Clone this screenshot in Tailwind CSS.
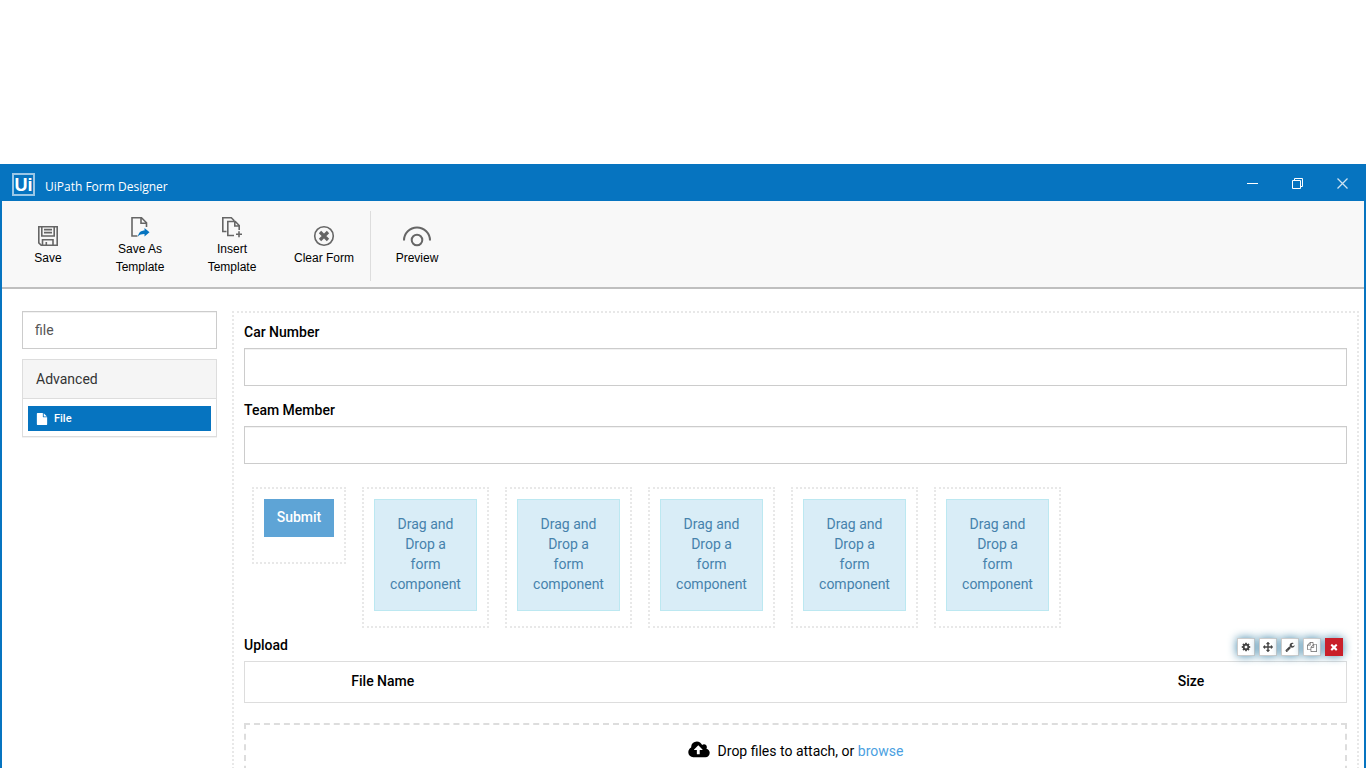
<!DOCTYPE html>
<html lang="en">
<head>
    <meta charset="UTF-8">
    <meta name="viewport" content="width=device-width, initial-scale=1.0">
    <title>UiPath Form Designer</title>
    <script src="https://cdn.jsdelivr.net/npm/@tailwindcss/browser@4"></script>
</head>
<body class="bg-white h-screen overflow-hidden flex flex-col pt-[164px] font-[Roboto,sans-serif] text-sm leading-5 text-black">

<!-- Title bar -->
<header class="flex items-center justify-between h-[37px] shrink-0 bg-[#0674c0] text-white pl-3 pr-[17px]">
    <div class="flex items-center gap-2.5">
        <div class="w-[23px] h-[23px] mt-1 flex items-center justify-center border-2 border-white/60 font-['Liberation_Sans',sans-serif] font-bold text-[18px] leading-5">Ui</div>
        <h1 class="font-['Open_Sans',sans-serif] text-[12px] leading-4 pt-2">UiPath Form Designer</h1>
    </div>
    <div class="flex items-center gap-[33px]">
        <button type="button" aria-label="Minimize"><svg class="w-3 h-3" viewBox="0 0 12 12" stroke="#fff"><path d="M0 6.500h11"/></svg></button>
        <button type="button" aria-label="Restore"><svg class="w-3 h-3" viewBox="0 0 12 12" fill="none" stroke="#fff"><path d="M.5 3.500h8v8h-8zM2.500 3V1.500h8v8H9"/></svg></button>
        <button type="button" aria-label="Close"><svg class="w-3 h-3" viewBox="0 0 12 12" stroke="#fff" opacity=".8"><path d="M.5 1.500l10 10M10.500 1.500l-10 10" stroke-width="1.300"/></svg></button>
    </div>
</header>

<div class="flex-1 min-h-0 flex flex-col border-x-2 border-[#0674c0]">

    <!-- Toolbar -->
    <nav class="flex items-center h-[88px] pt-[3px] shrink-0 bg-[#f8f8f8] border-b-2 border-[#bfbfbf] font-['Liberation_Sans',sans-serif] text-[12px] leading-[18px]">
        <button type="button" class="w-[92px] flex flex-col items-center gap-0.5">
            <svg class="w-[22px] h-[22px]" viewBox="0 0 22 22" fill="none" stroke="#666" stroke-width="1.600" aria-hidden="true">
                <path d="M1.800 1.800h18.400v18.400H4.200L1.800 17.800zM4.800 1.800v9.200h12.400V1.800M7 4.600h8M7 7.600h8M5.500 20v-5.300h10.500V20M9.300 20v-3"/>
            </svg>
            Save
        </button>
        <button type="button" class="w-[92px] flex flex-col items-center gap-0.5">
            <svg class="w-[22px] h-[22px]" viewBox="0 0 22 22" fill="none" stroke="#666" stroke-width="1.600" aria-hidden="true">
                <path d="M8.500 20H3V1.800h9.500l5 5V11M12 1.800v5.500h5.500"/>
                <path d="M9 20.500c.5-4 3-6 6.500-6V12l5 4.200-5 4.300V18c-3 0-5 .7-6.500 2.500z" fill="#0674c0" stroke="none"/>
            </svg>
            <span>Save As<br>Template</span>
        </button>
        <button type="button" class="w-[92px] flex flex-col items-center gap-0.5">
            <svg class="w-[22px] h-[22px]" viewBox="0 0 22 22" fill="none" stroke="#666" stroke-width="1.600" aria-hidden="true">
                <path d="M5.500 15.500H1.800V1.800h8.500l3 3M13 19.500H6.800v-14h7.500l3.900 4V14M13.800 5.500V10h4.300M15 18.200h6M18 15.200v6"/>
            </svg>
            <span>Insert<br>Template</span>
        </button>
        <button type="button" class="w-[92px] flex flex-col items-center gap-0.5">
            <svg class="w-[22px] h-[22px]" viewBox="0 0 22 22" fill="none" stroke="#666" aria-hidden="true">
                <circle cx="11" cy="11" r="9.300" stroke-width="1.600"/>
                <path d="M7 7l8 8M15 7l-8 8" stroke-width="3.300"/>
            </svg>
            Clear Form
        </button>
        <div class="w-px h-[70px] bg-[#ddd]"></div>
        <button type="button" class="w-[92px] flex flex-col items-center gap-0.5">
            <svg class="w-[30px] h-[22px]" viewBox="0 0 30 22" fill="none" stroke="#666" stroke-width="2" aria-hidden="true">
                <path d="M2 15.500a13 13 0 0 1 26 0"/>
                <circle cx="15" cy="15" r="5.300"/>
            </svg>
            Preview
        </button>
    </nav>

    <div class="flex-1 min-h-0 flex items-start gap-[15px] pt-[22px] pl-5 pr-[5px]">

        <!-- Component list -->
        <aside class="w-[195px] shrink-0">
            <input type="text" aria-label="Search components" value="file" class="block w-full h-[38px] px-3 border border-[#ccc] text-[#555] inset-shadow-2xs">
            <section class="mt-2.5 border border-[#ddd] shadow-2xs">
                <h2 class="px-[13px] py-[9px] bg-[#f5f5f5] border-b border-[#ddd] text-[#333]">Advanced</h2>
                <div class="px-[5px] pt-[7px] pb-[5px]">
                    <button type="button" class="w-full h-[25px] flex items-center gap-1.5 px-2 bg-[#0674c0] text-white text-[11px] font-medium">
                        <svg class="w-3 h-3" viewBox="0 0 1792 1792" fill="currentColor" aria-hidden="true"><path d="M1152 512v-472q22 14 36 28l408 408q14 14 28 36h-472zm-128 32q0 40 28 68t68 28h544v1056q0 40-28 68t-68 28h-1344q-40 0-68-28t-28-68v-1600q0-40 28-68t68-28h800v544z"/></svg>
                        File
                    </button>
                </div>
            </section>
        </aside>

        <!-- Form canvas -->
        <main class="flex-1 min-w-0 border-2 border-dotted border-[#e8e8e8] px-2.5 pt-[9px] pb-2.5">
            <div class="mb-[14px]">
                <label for="car-number" class="block mb-1.5 font-medium">Car Number</label>
                <input type="text" id="car-number" class="block w-full h-[38px] px-3 border border-[#ccc] inset-shadow-2xs">
            </div>
            <div>
                <label for="team-member" class="block mb-1.5 font-medium">Team Member</label>
                <input type="text" id="team-member" class="block w-full h-[38px] px-3 border border-[#ccc] inset-shadow-2xs">
            </div>

            <div class="flex items-start gap-4 mt-[23px] ml-2">
                <div class="border-2 border-dotted border-[#e8e8e8] px-2.5 pt-2.5 pb-[25px]">
                    <button type="button" class="block w-[70px] h-[38px] pb-0.5 bg-[#5ea4d6] text-white font-medium">Submit</button>
                </div>
                <div class="border-2 border-dotted border-[#e8e8e8] px-2.5 pt-2.5 pb-[15px]">
                    <div class="w-[103px] px-[15px] pt-[14px] pb-4 bg-[#d9edf7] border border-[#bce8f1] text-[#4682ac] text-center">Drag and Drop a form component</div>
                </div>
                <div class="border-2 border-dotted border-[#e8e8e8] px-2.5 pt-2.5 pb-[15px]">
                    <div class="w-[103px] px-[15px] pt-[14px] pb-4 bg-[#d9edf7] border border-[#bce8f1] text-[#4682ac] text-center">Drag and Drop a form component</div>
                </div>
                <div class="border-2 border-dotted border-[#e8e8e8] px-2.5 pt-2.5 pb-[15px]">
                    <div class="w-[103px] px-[15px] pt-[14px] pb-4 bg-[#d9edf7] border border-[#bce8f1] text-[#4682ac] text-center">Drag and Drop a form component</div>
                </div>
                <div class="border-2 border-dotted border-[#e8e8e8] px-2.5 pt-2.5 pb-[15px]">
                    <div class="w-[103px] px-[15px] pt-[14px] pb-4 bg-[#d9edf7] border border-[#bce8f1] text-[#4682ac] text-center">Drag and Drop a form component</div>
                </div>
                <div class="border-2 border-dotted border-[#e8e8e8] px-2.5 pt-2.5 pb-[15px]">
                    <div class="w-[103px] px-[15px] pt-[14px] pb-4 bg-[#d9edf7] border border-[#bce8f1] text-[#4682ac] text-center">Drag and Drop a form component</div>
                </div>
            </div>

            <!-- Upload component with its edit buttons -->
            <div class="mt-1.5">
                <div class="flex items-center justify-between mb-[5px]">
                    <h3 class="font-medium">Upload</h3>
                    <div class="flex gap-1 pt-1 pr-1 text-[#444]">
                        <button type="button" aria-label="Settings" class="w-[18px] h-[18px] flex items-center justify-center bg-white border border-[#ccc] shadow-[0_0_10px_#48a]">
                            <svg class="w-2.5 h-2.5" viewBox="0 0 1792 1792" fill="currentColor"><path d="M1152 896q0-106-75-181t-181-75-181 75-75 181 75 181 181 75 181-75 75-181zm512-109v222q0 12-8 23t-20 13l-185 28q-19 54-39 91 35 50 107 138 10 12 10 25t-9 23q-27 37-99 108t-94 71q-12 0-26-9l-138-108q-44 23-91 38-16 136-29 186-7 28-36 28h-222q-14 0-24.500-8.500t-11.500-21.500l-28-184q-49-16-90-37l-141 107q-10 9-25 9-14 0-25-11-126-114-165-168-7-10-7-23 0-12 8-23 15-21 51-66.500t54-70.500q-27-50-41-99l-183-27q-13-2-21-12.500t-8-23.500v-222q0-12 8-23t19-13l186-28q14-46 39-92-40-57-107-138-10-12-10-24 0-10 9-23 26-36 98.500-107.500t94.500-71.500q13 0 26 10l138 107q44-23 91-38 16-136 29-186 7-28 36-28h222q14 0 24.500 8.500t11.500 21.500l28 184q49 16 90 37l142-107q9-9 24-9 13 0 25 10 129 119 165 170 7 8 7 22 0 12-8 23-15 21-51 66.500t-54 70.500q26 50 41 98l183 28q13 2 21 12.500t8 23.500z"/></svg>
                        </button>
                        <button type="button" aria-label="Move" class="w-[18px] h-[18px] flex items-center justify-center bg-white border border-[#ccc] shadow-[0_0_10px_#48a]">
                            <svg class="w-2.5 h-2.5" viewBox="0 0 1792 1792" fill="currentColor"><path d="M1792 896q0 26-19 45l-256 256q-19 19-45 19t-45-19-19-45v-128h-384v384h128q26 0 45 19t19 45-19 45l-256 256q-19 19-45 19t-45-19l-256-256q-19-19-19-45t19-45 45-19h128v-384h-384v128q0 26-19 45t-45 19-45-19l-256-256q-19-19-19-45t19-45l256-256q19-19 45-19t45 19 19 45v128h384v-384h-128q-26 0-45-19t-19-45 19-45l256-256q19-19 45-19t45 19l256 256q19 19 19 45t-19 45-45 19h-128v384h384v-128q0-26 19-45t45-19 45 19l256 256q19 19 19 45z"/></svg>
                        </button>
                        <button type="button" aria-label="Edit JSON" class="w-[18px] h-[18px] flex items-center justify-center bg-white border border-[#ccc] shadow-[0_0_10px_#48a]">
                            <svg class="w-2.5 h-2.5" viewBox="0 0 1792 1792" fill="currentColor"><path d="M448 1472q0-26-19-45t-45-19-45 19-19 45 19 45 45 19 45-19 19-45zm644-420l-682 682q-37 37-90 37-52 0-91-37l-106-108q-38-36-38-90 0-53 38-91l681-681q39 98 114.500 173.500t173.500 114.500zm634-435q0 39-23 106-47 134-164.500 217.500t-258.500 83.500q-185 0-316.500-131.500t-131.500-316.500 131.500-316.500 316.500-131.500q58 0 121.500 16.500t107.500 46.500q16 11 16 28t-16 28l-293 169v224l193 107q5-3 79-48.500t135.500-81 70.500-35.500q15 0 23.500 10t8.500 25z"/></svg>
                        </button>
                        <button type="button" aria-label="Copy" class="w-[18px] h-[18px] flex items-center justify-center bg-white border border-[#ccc] text-[#666] shadow-[0_0_10px_#48a]">
                            <svg class="w-2.5 h-2.5" viewBox="0 0 1792 1792" fill="currentColor"><path d="M1696 384q40 0 68 28t28 68v1216q0 40-28 68t-68 28h-960q-40 0-68-28t-28-68v-288h-544q-40 0-68-28t-28-68v-672q0-40 20-88t48-76l408-408q28-28 76-48t88-20h416q40 0 68 28t28 68v328q68-40 128-40h416zm-544 213l-299 299h299v-299zm-640-384l-299 299h299v-299zm196 647l316-316v-416h-384v416q0 40-28 68t-68 28h-416v640h512v-256q0-40 20-88t48-76zm956 804v-1152h-384v416q0 40-28 68t-68 28h-416v640h896z"/></svg>
                        </button>
                        <button type="button" aria-label="Remove" class="w-[18px] h-[18px] flex items-center justify-center bg-[#c9202a] text-white shadow-[0_0_10px_#48a]">
                            <svg class="w-2.5 h-2.5" viewBox="0 0 1792 1792" fill="currentColor"><path d="M1490 1322q0 40-28 68l-136 136q-28 28-68 28t-68-28l-294-294-294 294q-28 28-68 28t-68-28l-136-136q-28-28-28-68t28-68l294-294-294-294q-28-28-28-68t28-68l136-136q28-28 68-28t68 28l294 294 294-294q28-28 68-28t68 28l136 136q28 28 28 68t-28 68l-294 294 294 294q28 28 28 68z"/></svg>
                        </button>
                    </div>
                </div>
                <table class="w-full table-fixed border border-[#ddd]">
                    <thead>
                        <tr class="h-[41px] text-left">
                            <td class="w-[8.33%]"></td>
                            <th scope="col" class="w-[75%] pl-[15px] pb-0.5 font-medium">File Name</th>
                            <th scope="col" class="pl-[15px] pb-0.5 font-medium">Size</th>
                        </tr>
                    </thead>
                </table>
                <div class="flex items-start justify-center mt-5 pt-[15px] h-[70px] border-2 border-dashed border-[#ddd]">
                    <svg class="w-[22px] h-5 mr-2" viewBox="0 0 1920 1792" fill="currentColor" aria-hidden="true"><path d="M1280 864q0-14-9-23l-352-352q-9-9-23-9t-23 9l-351 351q-10 12-10 24 0 14 9 23t23 9h224v352q0 13 9.500 22.500t22.500 9.500h192q13 0 22.500-9.500t9.500-22.500v-352h224q13 0 22.500-9.500t9.500-22.500zm640 288q0 159-112.500 271.500t-271.500 112.500h-1088q-185 0-316.500-131.500t-131.500-316.500q0-130 70-240t188-165q-2-30-2-43 0-212 150-362t362-150q156 0 285.500 87t188.500 231q71-62 166-62 106 0 181 75t75 181q0 76-41 138 130 31 213.500 135.500t83.500 238.500z"/></svg>
                    <p class="pt-px">Drop files to attach, or <a href="#" class="text-[#4b9fe1]">browse</a></p>
                </div>
            </div>
        </main>
    </div>
</div>

</body>
</html>
